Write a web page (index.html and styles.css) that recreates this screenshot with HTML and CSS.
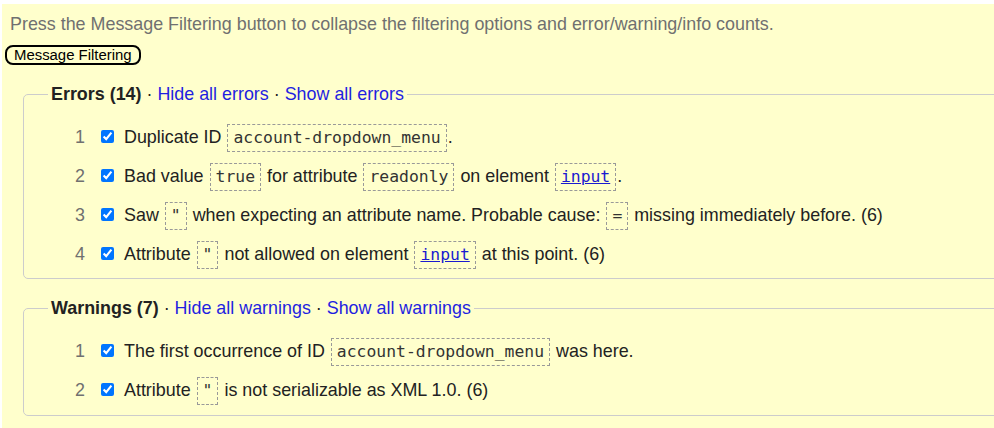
FILE: index.html
```html
<!DOCTYPE html>
<html lang="en">
<head>
<meta charset="utf-8">
<title>Message Filtering</title>
<link rel="stylesheet" href="styles.css">
</head>
<body>
<div class="panel">
  <p class="intro">Press the Message Filtering button to collapse the filtering options and error/warning/info counts.</p>
  <button class="toggle" type="button">Message Filtering</button>

  <fieldset class="group">
    <legend><strong>Errors (14)</strong> · <a href="#">Hide all errors</a> · <a href="#">Show all errors</a></legend>
    <div class="row"><span class="num">1</span><input type="checkbox" checked><span class="msg">Duplicate ID <code>account-dropdown_menu</code>.</span></div>
    <div class="row"><span class="num">2</span><input type="checkbox" checked><span class="msg">Bad value <code>true</code> for attribute <code>readonly</code> on element <code><a href="#">input</a></code>.</span></div>
    <div class="row"><span class="num">3</span><input type="checkbox" checked><span class="msg">Saw <code>"</code> when expecting an attribute name. Probable cause: <code>=</code> missing immediately before. (6)</span></div>
    <div class="row"><span class="num">4</span><input type="checkbox" checked><span class="msg">Attribute <code>"</code> not allowed on element <code><a href="#">input</a></code> at this point. (6)</span></div>
  </fieldset>

  <fieldset class="group group-warn">
    <legend><strong>Warnings (7)</strong> · <a href="#">Hide all warnings</a> · <a href="#">Show all warnings</a></legend>
    <div class="row"><span class="num">1</span><input type="checkbox" checked><span class="msg">The first occurrence of ID <code>account-dropdown_menu</code> was here.</span></div>
    <div class="row"><span class="num">2</span><input type="checkbox" checked><span class="msg">Attribute <code>"</code> is not serializable as XML 1.0. (6)</span></div>
  </fieldset>
</div>
</body>
</html>
```
FILE: styles.css
```css
html, body {
  margin: 0;
  padding: 0;
  background: #ffffff;
  overflow: hidden;
}

body {
  font-family: "Liberation Sans", Arial, sans-serif;
  font-size: 17.9px;
  color: #222222;
}

.panel {
  background: #ffffcc;
  margin: 4px -60px 0 2px;
  padding: 10px 0 30px 0;
}

.intro {
  margin: 0 0 0 8px;
  line-height: 20px;
  color: #707070;
}

.toggle {
  display: block;
  margin: 11px 0 0 3px;
  padding: 0 7px;
  height: 20px;
  font-family: "Liberation Sans", Arial, sans-serif;
  font-size: 14.9px;
  line-height: 16px;
  color: #000000;
  background: transparent;
  border: 2px solid #000000;
  border-radius: 8px;
}

.group {
  margin: 19px 0 0 21px;
  padding: 14px 0 4px 24px;
  border: 1px solid #cccccc;
  border-radius: 5px;
  min-width: 0;
}

.group-warn {
  margin-top: 19px;
  padding-bottom: 5px;
}

.group legend {
  padding: 0 3px;
  line-height: 20px;
  color: #222222;
}

.group legend strong {
  font-weight: bold;
}

.group legend a {
  color: #1f1fe0;
  text-decoration: none;
}

.row {
  line-height: 39px;
  height: 39px;
  white-space: nowrap;
}

.num {
  display: inline-block;
  width: 37px;
  text-align: right;
  color: #707070;
}

.row input {
  margin: 3px 10px 3px 16px;
  width: 13px;
  height: 13px;
  accent-color: #0075ff;
}

.msg {
  color: #222222;
}

code {
  display: inline-block;
  font-family: "DejaVu Sans Mono", "Liberation Mono", monospace;
  font-size: 16.4px;
  line-height: 26px;
  padding: 0 5px;
  margin: 0 1px;
  border: 1px dashed #999999;
  color: #333333;
}

code a {
  color: #1a1ad0;
  text-decoration: underline;
}
```
